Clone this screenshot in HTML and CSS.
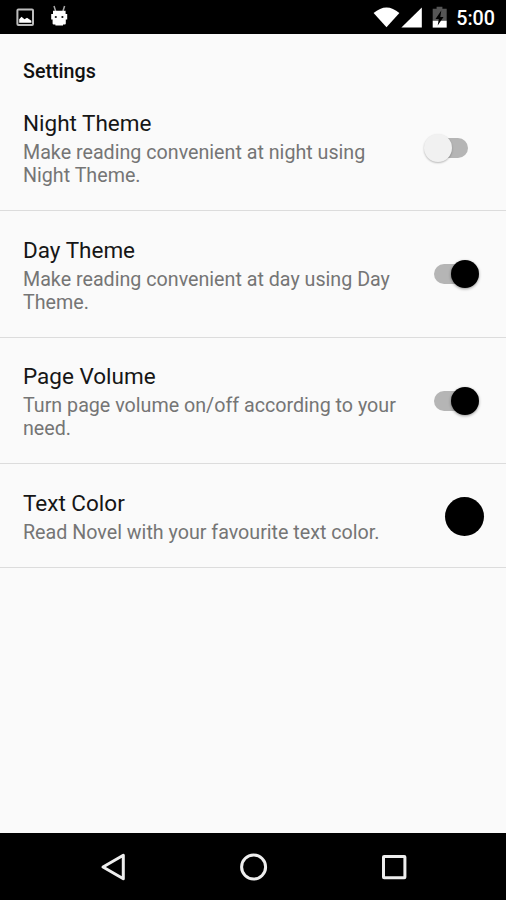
FILE: index.html
```html
<!DOCTYPE html>
<html lang="en">
<head>
<meta charset="utf-8">
<title>Settings</title>
<link rel="stylesheet" href="styles.css">
</head>
<body>
<div class="screen">
  <header class="status">
    <div class="status-left">
      <svg class="icon-picture" width="20" height="20" viewBox="0 0 20 20"><rect x="2.4" y="2.4" width="15.6" height="15.6" rx="1" fill="none" stroke="#bdbdbd" stroke-width="2"/><path d="M4.2 15.8V12.2L6.5 9.7L9.5 12.3L12 10.8L16.4 13.7V15.8Z" fill="#fff"/></svg>
      <svg class="icon-droid" width="20" height="22" viewBox="0 0 20 22"><path d="M5 2L6.6 7M15.6 2L14 7" stroke="#aaa" stroke-width="1.5"/><path d="M4 6.8H16.6V10H18.2V15.4H16.8V19.6Q16.8 20.6 15.8 20.6H14V21.6H6.4V20.6H4.6Q3.6 20.6 3.6 19.6V15.4H2.2V10H4Z" fill="#fff"/><circle cx="6.8" cy="13" r="1.1" fill="#111"/><circle cx="13.4" cy="13" r="1.1" fill="#111"/></svg>
    </div>
    <div class="status-right">
      <svg width="75" height="24" viewBox="0 0 75 24"><path d="M.6 7Q13.5-4.2 26.4 7L13.5 21.2Z" fill="#fff"/><path d="M48.8 1.6V21.4H28.4Z" fill="#fff"/><path d="M63.6 .8H69.4V2.7H73.7V15H59.7V2.7H63.6Z" fill="#555"/><path d="M59.7 14.8H73.7V21.6H59.7Z" fill="#fff"/><path d="M68.3 4.5L62.5 13H65.8L64.7 19.4L70.5 11H67.3Z" fill="#000"/></svg>
      <span class="clock">5:00</span>
    </div>
  </header>
  <main class="settings">
    <h1 class="heading">Settings</h1>
    <section class="row">
      <div class="copy"><h2 class="title">Night Theme</h2><p class="summary">Make reading convenient at night using<br>Night Theme.</p></div>
      <div class="switch off"><span class="thumb"></span></div>
    </section>
    <section class="row">
      <div class="copy"><h2 class="title">Day Theme</h2><p class="summary">Make reading convenient at day using Day<br>Theme.</p></div>
      <div class="switch on"><span class="thumb"></span></div>
    </section>
    <section class="row">
      <div class="copy"><h2 class="title">Page Volume</h2><p class="summary">Turn page volume on/off according to your<br>need.</p></div>
      <div class="switch on"><span class="thumb"></span></div>
    </section>
    <section class="row row-color">
      <div class="copy"><h2 class="title">Text Color</h2><p class="summary">Read Novel with your favourite text color.</p></div>
      <div class="swatch"></div>
    </section>
  </main>
  <nav class="navbar">
    <svg width="28" height="30" viewBox="0 0 28 30"><path d="M23.3 3.2V26.8L3 15Z" fill="none" stroke="#eee" stroke-width="3" stroke-linejoin="round"/></svg>
    <svg width="30" height="30" viewBox="0 0 30 30"><circle cx="14.6" cy="15" r="12" fill="none" stroke="#eee" stroke-width="3"/></svg>
    <svg width="28" height="30" viewBox="0 0 28 30"><rect x="3.5" y="4.4" width="21.4" height="21.4" rx=".6" fill="none" stroke="#eee" stroke-width="3"/></svg>
  </nav>
</div>
</body>
</html>
```
FILE: styles.css
```css
* { box-sizing: border-box; }
body { margin: 0; background: #fafafa; font-family: Roboto, "Liberation Sans", sans-serif; }
h1, h2, p { margin: 0; }
svg { display: block; }
.screen { display: flex; flex-direction: column; width: 506px; height: 900px; background: #fafafa; overflow: hidden; }
.status { display: flex; justify-content: space-between; flex: none; height: 34px; background: #000; }
.status-left { display: flex; gap: 14px; padding: 7px 0 0 15px; }
.icon-droid { margin-top: -3px; }
.status-right { display: flex; gap: 8px; padding: 6px 11px 0 0; }
.clock { color: #fff; font-size: 19.7px; font-weight: 500; line-height: 25px; }
.settings { flex: 1; }
.heading { padding: 25px 23px 0; height: 50.5px; font-size: 19.7px; font-weight: 500; line-height: 25px; color: #111; }
.row { display: flex; align-items: center; justify-content: space-between; height: 126.5px; padding: 2px 22px 0 23px; border-bottom: 1.4px solid #dcdcdc; }
.copy { flex: none; }
.title { margin-bottom: 4px; font-size: 22.5px; font-weight: 400; line-height: 28px; color: #161616; }
.summary { font-size: 19.68px; line-height: 23px; color: #757575; white-space: nowrap; }
.row-color { height: 104px; }
.switch { display: flex; align-items: center; flex: none; width: 34px; height: 20px; margin: 0 16px 1px 0; border-radius: 10px; background: #b5b5b5; }
.thumb { flex: none; width: 28px; height: 28px; border-radius: 50%; }
.on .thumb { margin-left: 17px; background: #000; box-shadow: 0 1px 3px #0006; }
.off .thumb { margin-left: -10px; background: #f1f1f1; box-shadow: 0 1px 2px #0004; }
.swatch { width: 39px; height: 39px; margin-bottom: 1px; border-radius: 50%; background: #000; }
.navbar { display: flex; align-items: center; justify-content: space-between; flex: none; height: 67px; padding: 0 98px 0 100px; background: #000; }
```
